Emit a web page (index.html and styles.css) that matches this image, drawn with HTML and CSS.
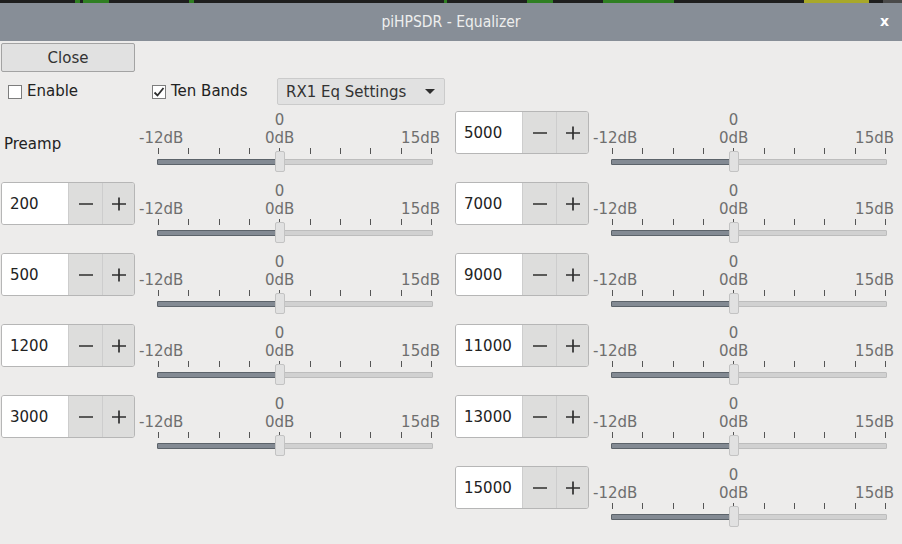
FILE: index.html
```html
<!DOCTYPE html>
<html>
<head>
<meta charset="utf-8">
<link rel="stylesheet" href="styles.css">
</head>
<body>
<div class="behind">
  <span class="g g1"></span><span class="g g1b"></span><span class="g g2"></span><span class="g g3"></span><span class="g g4"></span><span class="g g4b"></span><span class="y y1"></span><span class="lite"></span>
</div>
<div class="titlebar">
  <span class="title">piHPSDR - Equalizer</span>
  <span class="xbtn">x</span>
</div>
<div class="content">
  <button class="close">Close</button>
  <div class="opts">
    <label class="chk w1"><span class="box"></span>Enable</label>
    <label class="chk w2"><span class="box"><svg width="12" height="12" viewBox="0 0 12 12"><path d="M1.5 6.5 L4.5 9.5 L10.5 2" fill="none" stroke="#2e2e2e" stroke-width="1.8"/></svg></span>Ten Bands</label>
    <div class="combo"><span>RX1 Eq Settings</span><span class="arrow"></span></div>
  </div>
  <div class="cols">
    <div class="col left">
      <div class="row">
        <div class="preamp">Preamp</div>
        <div class="scale" style="--v:0.4444">
          <div class="lane"><span class="val">0</span></div>
          <div class="marks"><span>-12dB</span><span class="mid">0dB</span><span>15dB</span></div>
          <div class="lane ticks"><i></i><i></i><i></i><i></i><i></i><i></i><i></i><i></i><i></i><i></i></div>
          <div class="lane trough"><span class="fill"></span><span class="handle"></span></div>
        </div>
      </div>
      <div class="row">
        <div class="spin"><span class="entry">200</span><span class="btn"><svg width="16" height="16" viewBox="0 0 16 16"><path d="M1 8h14" stroke="#2e2e2e" stroke-width="1.7"/></svg></span><span class="btn"><svg width="16" height="16" viewBox="0 0 16 16"><path d="M1 8h14M8 1.5v13" stroke="#2e2e2e" stroke-width="1.7"/></svg></span></div>
        <div class="scale" style="--v:0.4444">
          <div class="lane"><span class="val">0</span></div>
          <div class="marks"><span>-12dB</span><span class="mid">0dB</span><span>15dB</span></div>
          <div class="lane ticks"><i></i><i></i><i></i><i></i><i></i><i></i><i></i><i></i><i></i><i></i></div>
          <div class="lane trough"><span class="fill"></span><span class="handle"></span></div>
        </div>
      </div>
      <div class="row">
        <div class="spin"><span class="entry">500</span><span class="btn"><svg width="16" height="16" viewBox="0 0 16 16"><path d="M1 8h14" stroke="#2e2e2e" stroke-width="1.7"/></svg></span><span class="btn"><svg width="16" height="16" viewBox="0 0 16 16"><path d="M1 8h14M8 1.5v13" stroke="#2e2e2e" stroke-width="1.7"/></svg></span></div>
        <div class="scale" style="--v:0.4444">
          <div class="lane"><span class="val">0</span></div>
          <div class="marks"><span>-12dB</span><span class="mid">0dB</span><span>15dB</span></div>
          <div class="lane ticks"><i></i><i></i><i></i><i></i><i></i><i></i><i></i><i></i><i></i><i></i></div>
          <div class="lane trough"><span class="fill"></span><span class="handle"></span></div>
        </div>
      </div>
      <div class="row">
        <div class="spin"><span class="entry">1200</span><span class="btn"><svg width="16" height="16" viewBox="0 0 16 16"><path d="M1 8h14" stroke="#2e2e2e" stroke-width="1.7"/></svg></span><span class="btn"><svg width="16" height="16" viewBox="0 0 16 16"><path d="M1 8h14M8 1.5v13" stroke="#2e2e2e" stroke-width="1.7"/></svg></span></div>
        <div class="scale" style="--v:0.4444">
          <div class="lane"><span class="val">0</span></div>
          <div class="marks"><span>-12dB</span><span class="mid">0dB</span><span>15dB</span></div>
          <div class="lane ticks"><i></i><i></i><i></i><i></i><i></i><i></i><i></i><i></i><i></i><i></i></div>
          <div class="lane trough"><span class="fill"></span><span class="handle"></span></div>
        </div>
      </div>
      <div class="row">
        <div class="spin"><span class="entry">3000</span><span class="btn"><svg width="16" height="16" viewBox="0 0 16 16"><path d="M1 8h14" stroke="#2e2e2e" stroke-width="1.7"/></svg></span><span class="btn"><svg width="16" height="16" viewBox="0 0 16 16"><path d="M1 8h14M8 1.5v13" stroke="#2e2e2e" stroke-width="1.7"/></svg></span></div>
        <div class="scale" style="--v:0.4444">
          <div class="lane"><span class="val">0</span></div>
          <div class="marks"><span>-12dB</span><span class="mid">0dB</span><span>15dB</span></div>
          <div class="lane ticks"><i></i><i></i><i></i><i></i><i></i><i></i><i></i><i></i><i></i><i></i></div>
          <div class="lane trough"><span class="fill"></span><span class="handle"></span></div>
        </div>
      </div>
    </div>
    <div class="col right">
      <div class="row">
        <div class="spin"><span class="entry">5000</span><span class="btn"><svg width="16" height="16" viewBox="0 0 16 16"><path d="M1 8h14" stroke="#2e2e2e" stroke-width="1.7"/></svg></span><span class="btn"><svg width="16" height="16" viewBox="0 0 16 16"><path d="M1 8h14M8 1.5v13" stroke="#2e2e2e" stroke-width="1.7"/></svg></span></div>
        <div class="scale" style="--v:0.4444">
          <div class="lane"><span class="val">0</span></div>
          <div class="marks"><span>-12dB</span><span class="mid">0dB</span><span>15dB</span></div>
          <div class="lane ticks"><i></i><i></i><i></i><i></i><i></i><i></i><i></i><i></i><i></i><i></i></div>
          <div class="lane trough"><span class="fill"></span><span class="handle"></span></div>
        </div>
      </div>
      <div class="row">
        <div class="spin"><span class="entry">7000</span><span class="btn"><svg width="16" height="16" viewBox="0 0 16 16"><path d="M1 8h14" stroke="#2e2e2e" stroke-width="1.7"/></svg></span><span class="btn"><svg width="16" height="16" viewBox="0 0 16 16"><path d="M1 8h14M8 1.5v13" stroke="#2e2e2e" stroke-width="1.7"/></svg></span></div>
        <div class="scale" style="--v:0.4444">
          <div class="lane"><span class="val">0</span></div>
          <div class="marks"><span>-12dB</span><span class="mid">0dB</span><span>15dB</span></div>
          <div class="lane ticks"><i></i><i></i><i></i><i></i><i></i><i></i><i></i><i></i><i></i><i></i></div>
          <div class="lane trough"><span class="fill"></span><span class="handle"></span></div>
        </div>
      </div>
      <div class="row">
        <div class="spin"><span class="entry">9000</span><span class="btn"><svg width="16" height="16" viewBox="0 0 16 16"><path d="M1 8h14" stroke="#2e2e2e" stroke-width="1.7"/></svg></span><span class="btn"><svg width="16" height="16" viewBox="0 0 16 16"><path d="M1 8h14M8 1.5v13" stroke="#2e2e2e" stroke-width="1.7"/></svg></span></div>
        <div class="scale" style="--v:0.4444">
          <div class="lane"><span class="val">0</span></div>
          <div class="marks"><span>-12dB</span><span class="mid">0dB</span><span>15dB</span></div>
          <div class="lane ticks"><i></i><i></i><i></i><i></i><i></i><i></i><i></i><i></i><i></i><i></i></div>
          <div class="lane trough"><span class="fill"></span><span class="handle"></span></div>
        </div>
      </div>
      <div class="row">
        <div class="spin"><span class="entry">11000</span><span class="btn"><svg width="16" height="16" viewBox="0 0 16 16"><path d="M1 8h14" stroke="#2e2e2e" stroke-width="1.7"/></svg></span><span class="btn"><svg width="16" height="16" viewBox="0 0 16 16"><path d="M1 8h14M8 1.5v13" stroke="#2e2e2e" stroke-width="1.7"/></svg></span></div>
        <div class="scale" style="--v:0.4444">
          <div class="lane"><span class="val">0</span></div>
          <div class="marks"><span>-12dB</span><span class="mid">0dB</span><span>15dB</span></div>
          <div class="lane ticks"><i></i><i></i><i></i><i></i><i></i><i></i><i></i><i></i><i></i><i></i></div>
          <div class="lane trough"><span class="fill"></span><span class="handle"></span></div>
        </div>
      </div>
      <div class="row">
        <div class="spin"><span class="entry">13000</span><span class="btn"><svg width="16" height="16" viewBox="0 0 16 16"><path d="M1 8h14" stroke="#2e2e2e" stroke-width="1.7"/></svg></span><span class="btn"><svg width="16" height="16" viewBox="0 0 16 16"><path d="M1 8h14M8 1.5v13" stroke="#2e2e2e" stroke-width="1.7"/></svg></span></div>
        <div class="scale" style="--v:0.4444">
          <div class="lane"><span class="val">0</span></div>
          <div class="marks"><span>-12dB</span><span class="mid">0dB</span><span>15dB</span></div>
          <div class="lane ticks"><i></i><i></i><i></i><i></i><i></i><i></i><i></i><i></i><i></i><i></i></div>
          <div class="lane trough"><span class="fill"></span><span class="handle"></span></div>
        </div>
      </div>
      <div class="row">
        <div class="spin"><span class="entry">15000</span><span class="btn"><svg width="16" height="16" viewBox="0 0 16 16"><path d="M1 8h14" stroke="#2e2e2e" stroke-width="1.7"/></svg></span><span class="btn"><svg width="16" height="16" viewBox="0 0 16 16"><path d="M1 8h14M8 1.5v13" stroke="#2e2e2e" stroke-width="1.7"/></svg></span></div>
        <div class="scale" style="--v:0.4444">
          <div class="lane"><span class="val">0</span></div>
          <div class="marks"><span>-12dB</span><span class="mid">0dB</span><span>15dB</span></div>
          <div class="lane ticks"><i></i><i></i><i></i><i></i><i></i><i></i><i></i><i></i><i></i><i></i></div>
          <div class="lane trough"><span class="fill"></span><span class="handle"></span></div>
        </div>
      </div>
    </div>
  </div>
</div>
</body>
</html>
```
FILE: styles.css
```css
* { box-sizing: border-box; }
html, body { margin: 0; padding: 0; }
body {
  width: 902px;
  height: 544px;
  overflow: hidden;
  background: #edeceb;
  font-family: "DejaVu Sans", "Liberation Sans", sans-serif;
  font-size: 15px;
  color: #2e3436;
}
.behind {
  height: 3px;
  background: #1e1e1e;
  display: flex;
}
.behind span { height: 3px; display: block; }
.g { background: #2f7f22; }
.g1 { margin-left: 75px; width: 8px; }
.g1b { margin-left: 3px; width: 40px; }
.g2 { margin-left: 80px; width: 8px; }
.g3 { margin-left: 250px; width: 4px; }
.g4 { margin-left: 80px; width: 40px; }
.g4b { margin-left: 50px; width: 110px; }
.y { background: #a8a82a; }
.y1 { margin-left: 130px; width: 100px; }
.lite { margin-left: 14px; width: 30px; background: #4a4a4a; }

.titlebar {
  height: 38px;
  background: #878e97;
  display: flex;
  align-items: center;
  justify-content: center;
  position: relative;
}
.title {
  font-family: "DejaVu Sans Condensed", "DejaVu Sans", sans-serif;
  font-stretch: condensed;
  font-size: 15.5px;
  color: #eeeeee;
}
.xbtn {
  position: absolute;
  right: 13px;
  top: 10px;
  font-size: 14px;
  font-weight: bold;
  color: #ffffff;
}

.content {
  padding-left: 1px;
  display: flex;
  flex-direction: column;
}
.close {
  margin-top: 2px;
  width: 134px;
  height: 29px;
  background: #e1e1e1;
  border: 1px solid #a3a3a3;
  border-radius: 2px;
  font-family: inherit;
  font-size: 15px;
  color: #333;
  padding: 0;
}
.opts {
  margin-top: 6px;
  display: flex;
  align-items: center;
  height: 27px;
  padding-left: 7px;
}
.chk {
  display: flex;
  align-items: center;
  gap: 5px;
  color: #222;
  line-height: 17px;
}
.w1 { width: 144px; }
.w2 { width: 125px; }
.box {
  width: 14px;
  height: 14px;
  background: #ffffff;
  border: 1px solid #7d7d7d;
  display: flex;
  align-items: center;
  justify-content: center;
}
.combo {
  width: 168px;
  height: 27px;
  background: #e1e1e1;
  border: 1px solid #cbcbcb;
  border-radius: 2px;
  display: flex;
  align-items: center;
  justify-content: space-between;
  padding: 0 9px 0 8px;
  color: #333;
}
.arrow {
  width: 0;
  height: 0;
  border-left: 5px solid transparent;
  border-right: 5px solid transparent;
  border-top: 5px solid #2e2e2e;
}

.cols {
  margin-top: 6px;
  display: flex;
}
.col { display: flex; flex-direction: column; }
.left { width: 440px; margin-right: 14px; }
.row {
  height: 71px;
  display: flex;
  gap: 2px;
}
.preamp {
  width: 134px;
  padding: 25px 0 0 3px;
  line-height: 17px;
  color: #222;
}
.spin {
  width: 134px;
  height: 43px;
  border: 1px solid #b6b6b6;
  border-radius: 3px;
  display: flex;
  overflow: hidden;
}
.entry {
  width: 66px;
  background: #ffffff;
  padding-left: 8px;
  display: flex;
  align-items: center;
  color: #222;
}
.btn {
  width: 34px;
  background: #dddddc;
  border-left: 1px solid #cdcdcd;
  display: flex;
  align-items: center;
  justify-content: center;
}
.btn:last-child { width: 32px; }

.scale {
  width: 304px;
  display: flex;
  flex-direction: column;
  color: #6f6f6f;
}
.lane {
  margin-left: 20px;
  width: 276px;
}
.val {
  display: inline-block;
  line-height: 17px;
  height: 17px;
  margin-left: calc(var(--v) * 100%);
  transform: translateX(-50%);
}
.marks {
  height: 18px;
  line-height: 18px;
  display: flex;
  justify-content: space-between;
  padding: 0 1px 0 2px;
  position: relative;
}
.marks .mid {
  position: absolute;
  left: calc(20px + var(--v) * 276px);
  transform: translateX(-50%);
}
.ticks {
  margin-top: 1px;
  height: 6px;
  display: flex;
  justify-content: space-between;
  padding: 0 1px;
}
.ticks i {
  width: 1px;
  height: 6px;
  background: #555555;
}
.trough {
  margin-top: 5px;
  height: 6px;
  background: #d1d1d1;
  border: 1px solid #bdbdbd;
  border-radius: 1px;
  position: relative;
}
.fill {
  position: absolute;
  left: -1px;
  top: -1px;
  height: 6px;
  width: calc(var(--v) * 100%);
  background: #838a93;
  border: 1px solid #5c636a;
  border-radius: 1px;
}
.handle {
  position: absolute;
  top: -9px;
  left: calc(var(--v) * 100%);
  transform: translateX(-50%);
  width: 10px;
  height: 21px;
  background: #e1e1e1;
  border: 1px solid #c3c3c3;
  border-radius: 2px;
}
```
